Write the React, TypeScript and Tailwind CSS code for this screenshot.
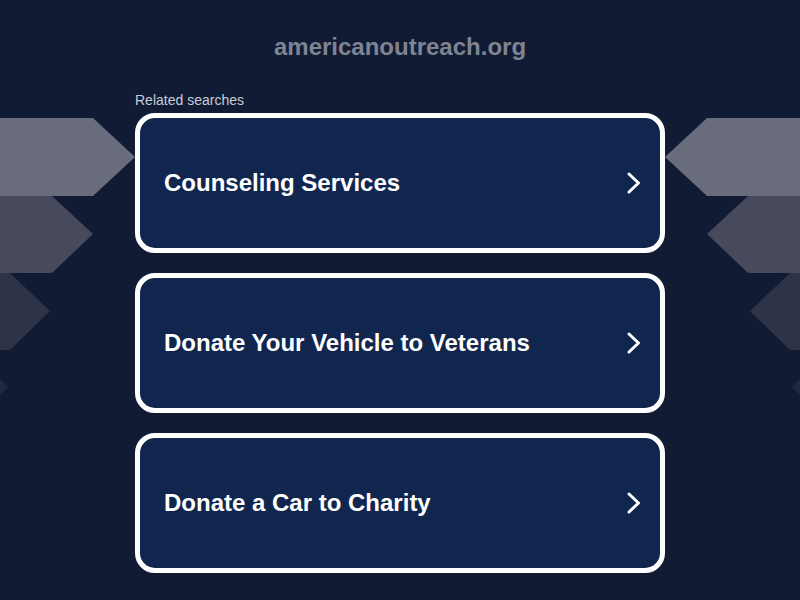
const searches = [
  "Counseling Services",
  "Donate Your Vehicle to Veterans",
  "Donate a Car to Charity",
];

function Arrows() {
  return (
    <svg
      className="absolute inset-0 pointer-events-none"
      width="800"
      height="600"
      viewBox="0 0 800 600"
    >
      <g>
        <polygon points="-42,118 93,118 135,157 93,196 -42,196" fill="#686c7d" />
        <polygon points="-84,196 52,196 93,234 52,273 -84,273" fill="#474a5d" />
        <polygon points="-126,273 10,273 50,311 10,350 -126,350" fill="#2f3348" />
        <polygon points="-168,350 -32,350 8,387 -32,426 -168,426" fill="#212840" />
      </g>
      <g transform="translate(800,0) scale(-1,1)">
        <polygon points="-42,118 93,118 135,157 93,196 -42,196" fill="#686c7d" />
        <polygon points="-84,196 52,196 93,234 52,273 -84,273" fill="#474a5d" />
        <polygon points="-126,273 10,273 50,311 10,350 -126,350" fill="#2f3348" />
        <polygon points="-168,350 -32,350 8,387 -32,426 -168,426" fill="#212840" />
      </g>
    </svg>
  );
}

function Chevron() {
  return (
    <svg width="16" height="22" viewBox="0 0 16 22" className="shrink-0">
      <polyline
        points="3,2 12.5,11 3,20"
        fill="none"
        stroke="white"
        strokeWidth="3"
        strokeLinecap="round"
        strokeLinejoin="round"
      />
    </svg>
  );
}

export default function App() {
  return (
    <div
      className="relative w-[800px] h-[600px] overflow-hidden bg-[#111b34]"
      style={{ fontFamily: '"Liberation Sans", Arial, sans-serif' }}
    >
      <Arrows />
      <div className="relative flex flex-col items-center">
        <h1 className="mt-[33px] text-[24px] leading-[28px] font-bold text-[#7f8493]">
          americanoutreach.org
        </h1>
        <div className="w-[530px] mt-[31px]">
          <p className="text-[14px] leading-[16px] text-[#c9ccd4]">Related searches</p>
          <div className="mt-[5px] flex flex-col gap-[20px]">
            {searches.map((s) => (
              <a
                key={s}
                href="#"
                className="flex items-center justify-between h-[140px] rounded-[20px] border-[5px] border-white bg-[#11264f] pl-[24px] pr-[18px]"
              >
                <span className="text-[24px] leading-[28px] font-bold text-white">{s}</span>
                <Chevron />
              </a>
            ))}
          </div>
        </div>
      </div>
    </div>
  );
}
